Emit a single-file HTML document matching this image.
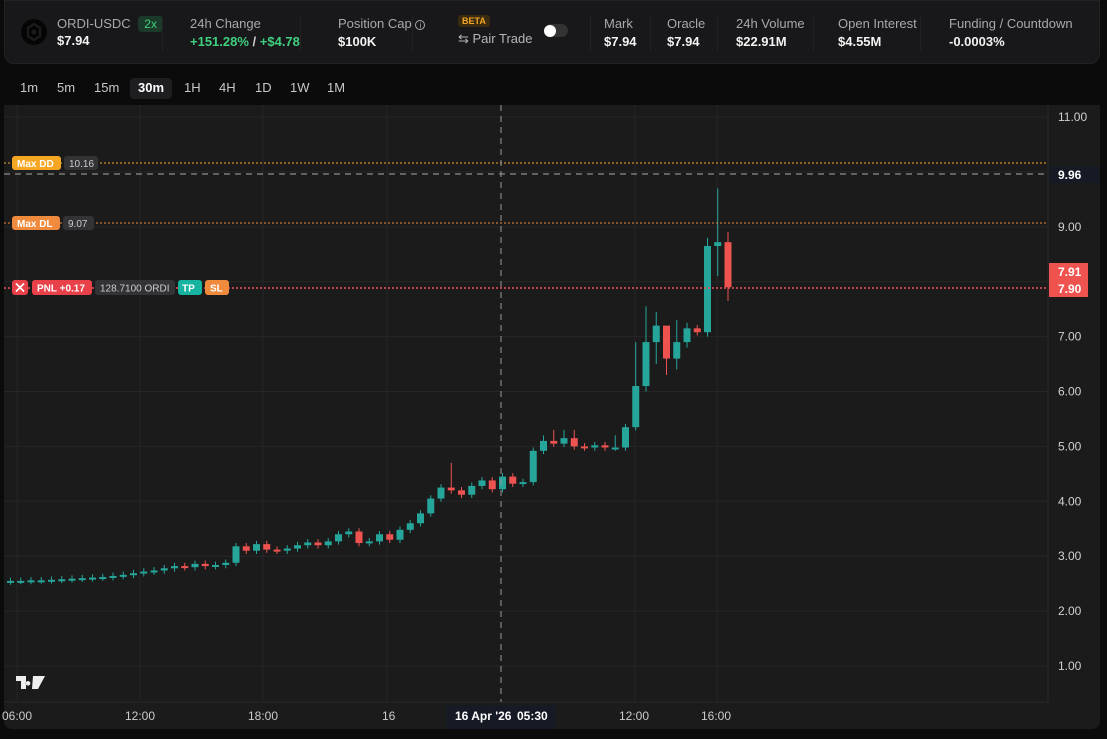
<!DOCTYPE html>
<html><head><meta charset="utf-8"><style>
*{margin:0;padding:0;box-sizing:border-box}
body{width:1107px;height:739px;background:#0b0b0c;font-family:"Liberation Sans",sans-serif;overflow:hidden;position:relative;color:#eee}
.hdr{position:absolute;left:4px;top:0;width:1096px;height:64px;background:#18181a;border-radius:0 0 10px 10px;border:1px solid #222}
.it{position:absolute;top:15px}
.lb{font-size:13px;color:#a8a8ad}
.vl{font-size:13px;font-weight:bold;color:#f2f2f2;margin-top:3px}
.sep{position:absolute;top:14px;width:1px;height:36px;background:#222224}
.tf{position:absolute;top:80px;font-size:13px;color:#c8c8cc}
.chart{position:absolute;left:4px;top:105px;width:1096px;height:624px;background:#1b1b1c;border-radius:0 0 8px 8px}
</style></head><body>
<div class="hdr">
 <svg style="position:absolute;left:15px;top:17px" width="28" height="28" viewBox="0 0 28 28"><circle cx="14" cy="14" r="13" fill="#050505"/><path d="M8 10l6-4 6 4v8l-6 4-6-4z" fill="none" stroke="#1c1c1c" stroke-width="2.2"/><circle cx="14" cy="14" r="2.5" fill="#1c1c1c"/></svg>
 <div class="it" style="left:52px"><div class="lb">ORDI-USDC <span style="display:inline-block;background:#1b3a2a;color:#3fcf7f;border-radius:4px;padding:1px 6px;margin-left:4px;font-size:12px">2x</span></div><div class="vl" style="margin-top:1px">$7.94</div></div>
 <div class="sep" style="left:157px"></div>
 <div class="it" style="left:185px"><div class="lb">24h Change</div><div class="vl" style="color:#3fcf7f">+151.28% <span style="color:#ccc">/</span> +$4.78</div></div>
 <div class="sep" style="left:295px"></div>
 <div class="it" style="left:333px"><div class="lb">Position Cap <span style="display:inline-block;width:10px;height:10px;border:1px solid #aaa;border-radius:50%;font-size:8px;text-align:center;line-height:9px">i</span></div><div class="vl">$100K</div></div>
 <div class="sep" style="left:407px"></div>
 <div style="position:absolute;left:453px;top:14px;background:#3a2a10;color:#f5a623;font-size:9px;font-weight:bold;padding:1px 4px;border-radius:3px">BETA</div>
 <div style="position:absolute;left:453px;top:30px;font-size:13px;color:#b5b5ba">⇆ Pair Trade</div>
 <div style="position:absolute;left:539px;top:23px;width:24px;height:13px;border-radius:7px;background:#333"><div style="width:12px;height:12px;border-radius:50%;background:#fff;margin-top:0.5px"></div></div>
 <div class="sep" style="left:585px"></div>
 <div class="it" style="left:599px"><div class="lb">Mark</div><div class="vl">$7.94</div></div>
 <div class="sep" style="left:645px"></div>
 <div class="it" style="left:662px"><div class="lb">Oracle</div><div class="vl">$7.94</div></div>
 <div class="sep" style="left:712px"></div>
 <div class="it" style="left:731px"><div class="lb">24h Volume</div><div class="vl">$22.91M</div></div>
 <div class="sep" style="left:808px"></div>
 <div class="it" style="left:833px"><div class="lb">Open Interest</div><div class="vl">$4.55M</div></div>
 <div class="sep" style="left:915px"></div>
 <div class="it" style="left:944px"><div class="lb">Funding / Countdown</div><div class="vl">-0.0003%</div></div>
</div>
<div class="tf" style="left:20px">1m</div><div class="tf" style="left:57px">5m</div><div class="tf" style="left:94px">15m</div>
<div style="position:absolute;left:130px;top:78px;width:42px;height:21px;background:#1e1e20;border-radius:4px"></div>
<div class="tf" style="left:138px;color:#fff;font-weight:bold">30m</div>
<div class="tf" style="left:184px">1H</div><div class="tf" style="left:219px">4H</div><div class="tf" style="left:255px">1D</div><div class="tf" style="left:290px">1W</div><div class="tf" style="left:327px">1M</div>
<div class="chart"></div>
<svg id="s" style="position:absolute;left:0;top:0" width="1107" height="739" font-family="Liberation Sans, sans-serif"></svg>
<script>
const s=document.getElementById('s');let h='';
const Y=p=>117+(11-p)*54.9;
h+='<line x1="1048" y1="105" x2="1048" y2="702" stroke="#2a2a2c"/><line x1="4" y1="702" x2="1048" y2="702" stroke="#2a2a2c"/>';
for(let p=1;p<=11;p++){h+=`<line x1="4" x2="1048" y1="${Y(p)}" y2="${Y(p)}" stroke="#262628"/>`;if(p!=10&&p!=8)h+=`<text x="1058" y="${Y(p)+4}" font-size="12" fill="#d0d0d0">${p.toFixed(2)}</text>`;}
[17,140,263,387,635,717].forEach(x=>h+=`<line x1="${x}" x2="${x}" y1="105" y2="702" stroke="#262628"/>`);
const c=[2.55,2.55,2.56,2.56,2.57,2.58,2.59,2.6,2.61,2.62,2.64,2.66,2.69,2.72,2.74,2.78,2.82,2.8,2.86,2.82,2.84,2.88,3.18,3.1,3.22,3.12,3.1,3.14,3.2,3.25,3.2,3.27,3.4,3.45,3.24,3.27,3.4,3.3,3.48,3.6,3.78,4.05,4.25,4.2,4.12,4.28,4.38,4.22,4.45,4.32,4.35,4.92,5.1,5.05,5.15,5.0,4.98,5.02,4.98,4.98,5.35,6.1,6.9,7.2,6.6,6.9,7.15,7.08,8.65,8.72,7.9];
const hi={68:8.8,69:9.7,70:8.9,66:7.25,65:7.3,62:7.55,63:7.45,61:6.9,64:7.2,55:5.3,53:5.3,54:5.3,52:5.2,43:4.7,59:5.2};
const lo={68:7.0,69:8.1,70:7.65,64:6.3,63:6.5,65:6.4,62:6.0,66:6.8};
for(let i=0;i<c.length;i++){const x=728-(70-i)*10.25;const o=i?c[i-1]:2.54;const cl=c[i];const up=cl>=o;const col=up?'#26a69a':'#ef5350';
const H=hi[i]||Math.max(o,cl)+0.06,L=lo[i]||Math.min(o,cl)-0.06;
h+=`<line x1="${x}" x2="${x}" y1="${Y(H)}" y2="${Y(L)}" stroke="${col}"/>`;
const t=Y(Math.max(o,cl)),b=Y(Math.min(o,cl));h+=`<rect x="${x-3.5}" y="${t}" width="7" height="${Math.max(2,b-t)}" fill="${col}"/>`;}
h+=`<line x1="4" x2="1048" y1="163" y2="163" stroke="#f5a623" stroke-dasharray="2 2"/>`;
h+=`<line x1="4" x2="1048" y1="174" y2="174" stroke="#aaa" stroke-dasharray="6 5"/>`;
h+=`<line x1="4" x2="1048" y1="223" y2="223" stroke="#f08a3c" stroke-dasharray="2 2"/>`;
h+=`<line x1="4" x2="1048" y1="288" y2="288" stroke="#ef5350" stroke-width="1.5" stroke-dasharray="2 2"/>`;
h+=`<line x1="501" x2="501" y1="105" y2="702" stroke="#999" stroke-dasharray="6 5"/>`;
h+=`<rect x="12" y="156" width="49" height="14" rx="3" fill="#f5a623"/><text x="17" y="167" font-size="10" font-weight="bold" fill="#fff">Max DD</text>`;
h+=`<rect x="64" y="156" width="34" height="14" rx="3" fill="#333336"/><text x="69" y="167" font-size="10" fill="#ccc">10.16</text>`;
h+=`<rect x="12" y="216" width="48" height="14" rx="3" fill="#f08a3c"/><text x="17" y="227" font-size="10" font-weight="bold" fill="#fff">Max DL</text>`;
h+=`<rect x="63" y="216" width="31" height="14" rx="3" fill="#333336"/><text x="68" y="227" font-size="10" fill="#ccc">9.07</text>`;
h+=`<rect x="12" y="280" width="16" height="15" rx="3" fill="#e8414a"/><path d="M16 283.5l8 8M24 283.5l-8 8" stroke="#fff" stroke-width="1.6"/>`;
h+=`<rect x="32" y="280" width="60" height="15" rx="3" fill="#e8414a"/><text x="37" y="291.5" font-size="10" font-weight="bold" fill="#fff">PNL +0.17</text>`;
h+=`<rect x="95" y="280" width="80" height="15" rx="3" fill="#333336"/><text x="100" y="291.5" font-size="10" fill="#ccc">128.7100 ORDI</text>`;
h+=`<rect x="178" y="280" width="24" height="15" rx="3" fill="#16b3a0"/><text x="182" y="291.5" font-size="10" font-weight="bold" fill="#fff">TP</text>`;
h+=`<rect x="205" y="280" width="24" height="15" rx="3" fill="#f08a3c"/><text x="210" y="291.5" font-size="10" font-weight="bold" fill="#fff">SL</text>`;
h+=`<rect x="1049" y="166" width="50" height="17" fill="#151a24"/><text x="1058" y="179" font-size="12" font-weight="bold" fill="#fff">9.96</text>`;
h+=`<rect x="1049" y="263" width="39" height="34" fill="#ef5350"/><text x="1058" y="276" font-size="12" font-weight="bold" fill="#fff">7.91</text><text x="1058" y="293" font-size="12" font-weight="bold" fill="#fff">7.90</text>`;
h+=`<path d="M16 676h10v13h-5v-8h-5z M28 681a2.3 2.3 0 1 0 0.1 0z M33 676h12l-7 13h-6z" fill="#eee"/>`;
[[2,'06:00'],[125,'12:00'],[248,'18:00'],[382,'16'],[619,'12:00'],[701,'16:00']].forEach(a=>h+=`<text x="${a[0]}" y="720" font-size="12" fill="#ccc">${a[1]}</text>`);
h+=`<rect x="446" y="705" width="110" height="24" fill="#151a24"/><text x="455" y="720" font-size="12" font-weight="bold" fill="#fff">16 Apr '26</text><text x="517" y="720" font-size="12" font-weight="bold" fill="#fff">05:30</text>`;
s.innerHTML=h;
</script>
</body></html>
